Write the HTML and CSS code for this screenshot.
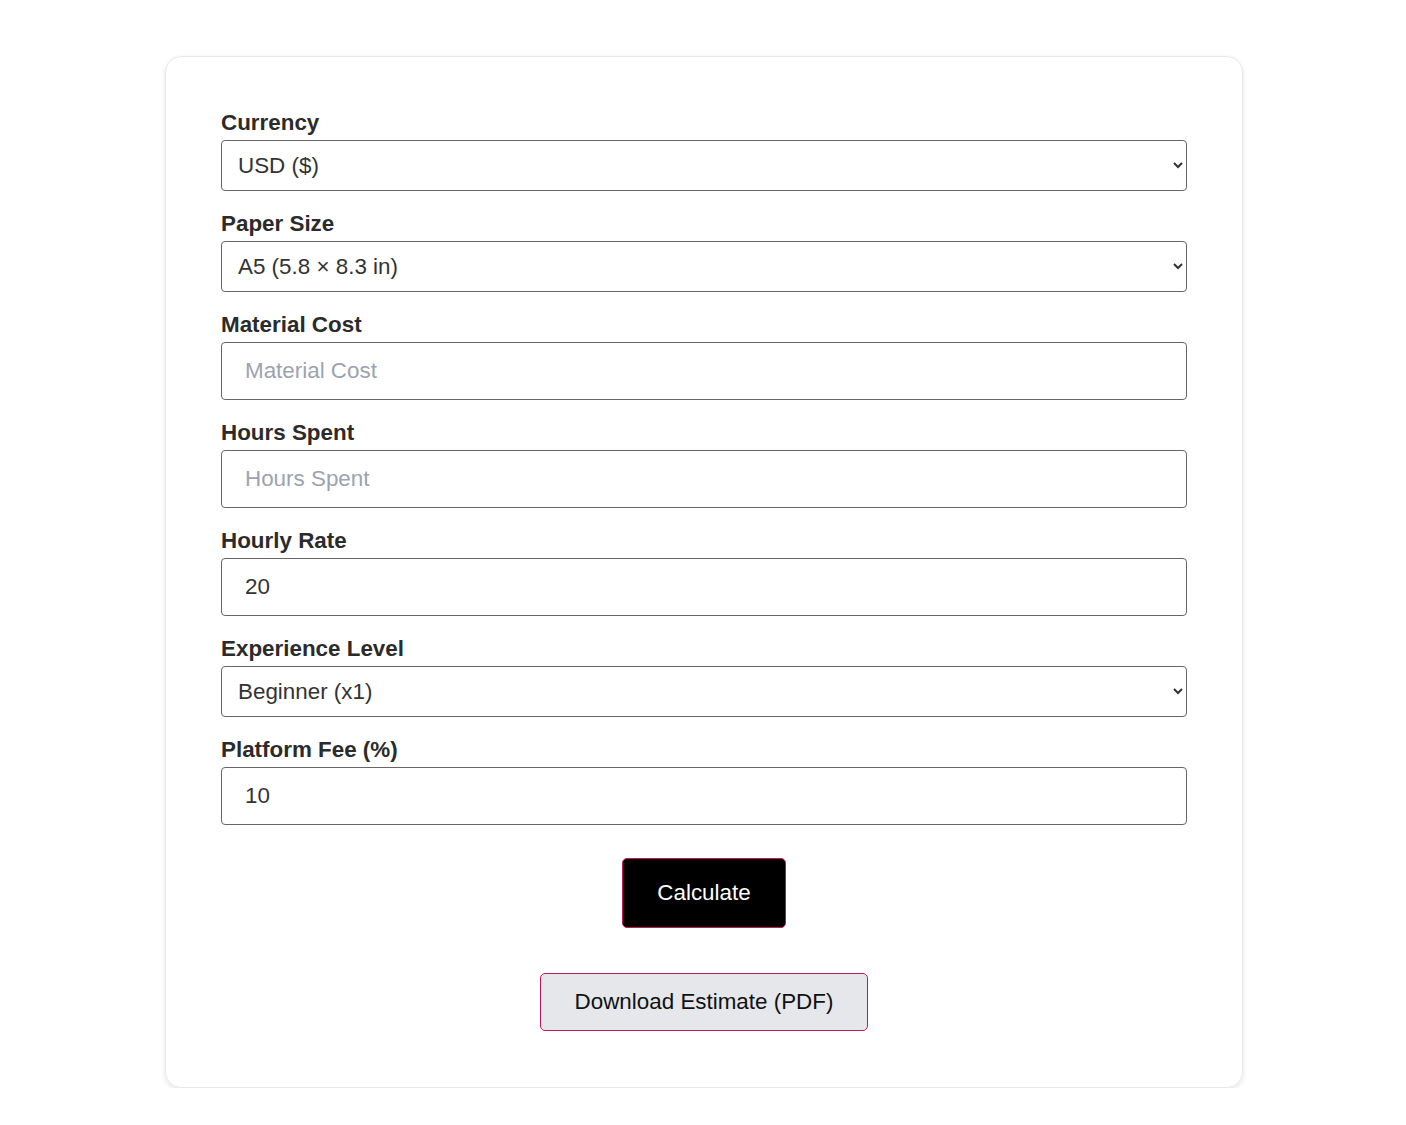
FILE: index.html
```html
<!DOCTYPE html>
<html lang="en">
<head>
    <meta charset="UTF-8">
    <meta name="viewport" content="width=device-width, initial-scale=1.0">
    <title>Art Commission Estimator</title>
    <link rel="stylesheet" href="styles.css">
</head>
<body>
    <div class="card">
        <label for="currency">Currency</label>
        <select id="currency" class="field select">
            <option>USD ($)</option>
            <option>EUR (€)</option>
            <option>GBP (£)</option>
        </select>

        <label for="paper">Paper Size</label>
        <select id="paper" class="field select">
            <option>A5 (5.8 × 8.3 in)</option>
            <option>A4 (8.3 × 11.7 in)</option>
            <option>A3 (11.7 × 16.5 in)</option>
        </select>

        <label for="material">Material Cost</label>
        <input type="number" id="material" class="field input" placeholder="Material Cost">

        <label for="hours">Hours Spent</label>
        <input type="number" id="hours" class="field input" placeholder="Hours Spent">

        <label for="rate">Hourly Rate</label>
        <input type="number" id="rate" class="field input" value="20">

        <label for="experience">Experience Level</label>
        <select id="experience" class="field select">
            <option>Beginner (x1)</option>
            <option>Intermediate (x1.5)</option>
            <option>Expert (x2)</option>
        </select>

        <label for="fee">Platform Fee (%)</label>
        <input type="number" id="fee" class="field input" value="10">

        <div class="actions">
            <button class="btn btn-calc">Calculate</button>
            <button class="btn btn-pdf">Download Estimate (PDF)</button>
        </div>
    </div>
</body>
</html>
```

FILE: styles.css
```css
body {
    margin: 0;
    background-color: #fff;
    font-family: "Liberation Sans", Arial, sans-serif;
    color: #333;
}
.card {
    width: 966px;
    margin: 56px auto 0;
    padding: 53px 55px 56px;
    border: 1px solid #e8e8e8;
    border-radius: 16px;
    box-shadow: 0 2px 5px rgba(0, 0, 0, 0.1);
    position: relative;
    left: 1px;
}
label {
    display: block;
    font-size: 22.4px;
    font-weight: bold;
    color: #2b2b2b;
    margin-bottom: 4px;
}
.field {
    display: block;
    width: 100%;
    box-sizing: border-box;
    font-family: "Liberation Sans", Arial, sans-serif;
    font-size: 22.4px;
    color: #333;
    background-color: #fff;
    border: 1px solid #666;
    border-radius: 4px;
    margin-bottom: 20px;
}
.select {
    height: 51px;
    padding: 0 8px 0 12px;
}
.input {
    height: 58px;
    padding: 0 23px;
}
.input::placeholder {
    color: #9ca3af;
}
.input::-webkit-outer-spin-button,
.input::-webkit-inner-spin-button {
    -webkit-appearance: none;
    margin: 0;
}
.actions {
    display: flex;
    flex-direction: column;
    align-items: center;
    gap: 45px;
    padding-top: 13px;
}
.btn {
    font-family: "Liberation Sans", Arial, sans-serif;
    font-size: 22.4px;
    padding: 0 34px;
    border: 1px solid #c2185b;
    border-radius: 5px;
    cursor: pointer;
}
.btn-calc {
    height: 70px;
    background-color: #000;
    color: #fff;
}
.btn-pdf {
    height: 58px;
    background-color: #e5e7eb;
    color: #111;
}
```
